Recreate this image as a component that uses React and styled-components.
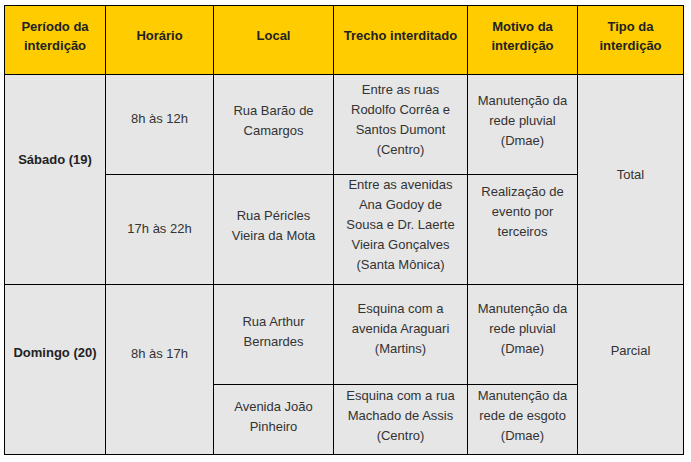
import React from 'react'
import styled, { createGlobalStyle } from 'styled-components'

const GlobalStyle = createGlobalStyle`
  body {
    margin: 0;
    background: #ffffff;
    font-family: 'Liberation Sans', Arial, sans-serif;
  }
`

const Page = styled.div`
  padding: 5px 0 0 4px;
`

const Table = styled.table`
  border-collapse: separate;
  border-spacing: 0;
  table-layout: fixed;
  width: 680px;
  border-left: 1px solid #000;
  border-top: 1px solid #000;
  font-size: 13px;
`

const Col = styled.col`
  width: ${p => p.w}px;
`

const Row = styled.tr`
  height: ${p => p.h}px;
`

const HeadCell = styled.th`
  box-sizing: border-box;
  background: #ffcc00;
  color: #222;
  font-weight: bold;
  line-height: 19px;
  text-align: center;
  vertical-align: middle;
  padding: 0 4px 9px;
  border-right: 1px solid #000;
  border-bottom: 1px solid #000;
`

const Cell = styled.td`
  box-sizing: border-box;
  background: #e6e6e6;
  color: ${p => (p.bold ? '#222' : '#333')};
  font-weight: ${p => (p.bold ? 'bold' : 'normal')};
  line-height: 20px;
  text-align: center;
  vertical-align: middle;
  padding: 0 4px ${p => p.pb ?? 10}px;
  border-right: 1px solid #000;
  border-bottom: 1px solid #000;
`

const Lines = ({ children }) =>
  children.split('\n').map((line, i, all) => (
    <React.Fragment key={i}>
      {line}
      {i < all.length - 1 && <br />}
    </React.Fragment>
  ))

const widths = [101, 108, 120, 134, 110, 106]

const headers = [
  'Período da\ninterdição',
  'Horário',
  'Local',
  'Trecho interditado',
  'Motivo da\ninterdição',
  'Tipo da\ninterdição',
]

export default function App() {
  return (
    <Page>
      <GlobalStyle />
      <Table>
        <colgroup>
          {widths.map((w, i) => (
            <Col key={i} w={w} />
          ))}
        </colgroup>
        <thead>
          <Row h={69}>
            {headers.map(h => (
              <HeadCell key={h}>
                <Lines>{h}</Lines>
              </HeadCell>
            ))}
          </Row>
        </thead>
        <tbody>
          <Row h={100}>
            <Cell rowSpan={2} bold pb={40}>Sábado (19)</Cell>
            <Cell pb={12}>8h às 12h</Cell>
            <Cell pb={8}>
              <Lines>{'Rua Barão de\nCamargos'}</Lines>
            </Cell>
            <Cell pb={10}>
              <Lines>{'Entre as ruas\nRodolfo Corrêa e\nSantos Dumont\n(Centro)'}</Lines>
            </Cell>
            <Cell pb={8}>
              <Lines>{'Manutenção da\nrede pluvial\n(Dmae)'}</Lines>
            </Cell>
            <Cell rowSpan={2} pb={10}>Total</Cell>
          </Row>
          <Row h={110}>
            <Cell pb={2}>17h às 22h</Cell>
            <Cell pb={8}>
              <Lines>{'Rua Péricles\nVieira da Mota'}</Lines>
            </Cell>
            <Cell pb={9}>
              <Lines>
                {'Entre as avenidas\nAna Godoy de\nSousa e Dr. Laerte\nVieira Gonçalves\n(Santa Mônica)'}
              </Lines>
            </Cell>
            <Cell pb={36}>
              <Lines>{'Realização de\nevento por\nterceiros'}</Lines>
            </Cell>
          </Row>
          <Row h={100}>
            <Cell rowSpan={2} bold pb={34}>Domingo (20)</Cell>
            <Cell rowSpan={2} pb={32}>8h às 17h</Cell>
            <Cell pb={6}>
              <Lines>{'Rua Arthur\nBernardes'}</Lines>
            </Cell>
            <Cell pb={12}>
              <Lines>{'Esquina com a\navenida Araguari\n(Martins)'}</Lines>
            </Cell>
            <Cell pb={12}>
              <Lines>{'Manutenção da\nrede pluvial\n(Dmae)'}</Lines>
            </Cell>
            <Cell rowSpan={2} pb={38}>Parcial</Cell>
          </Row>
          <Row h={70}>
            <Cell pb={6}>
              <Lines>{'Avenida João\nPinheiro'}</Lines>
            </Cell>
            <Cell pb={8}>
              <Lines>{'Esquina com a rua\nMachado de Assis\n(Centro)'}</Lines>
            </Cell>
            <Cell pb={8}>
              <Lines>{'Manutenção da\nrede de esgoto\n(Dmae)'}</Lines>
            </Cell>
          </Row>
        </tbody>
      </Table>
    </Page>
  )
}
